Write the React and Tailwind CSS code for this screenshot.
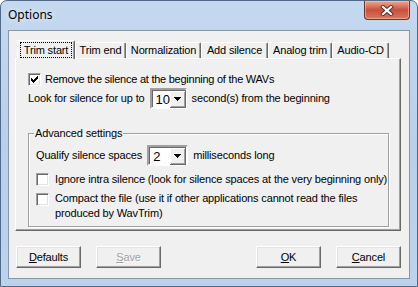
import React from 'react'

const FONT = "font-['Liberation_Sans',Arial,sans-serif] text-[11px] tracking-[-0.15px] text-black"

function CheckBox({ checked }) {
  return (
    <span className="w-[13px] h-[13px] shrink-0 bg-white border border-t-[#a0a0a0] border-l-[#a0a0a0] border-r-white border-b-white shadow-[inset_1px_1px_0_#696969,inset_-1px_-1px_0_#e3e3e3] flex items-center justify-center">
      {checked && (
        <svg width="9" height="9" viewBox="0 0 9 9" shapeRendering="crispEdges">
          <polygon points="1,3 3,5 7,1 8,1 8,3 3,8 1,6" fill="#000" />
        </svg>
      )}
    </span>
  )
}

function Combo({ value, width }) {
  return (
    <div
      className="h-[21px] shrink-0 bg-white border-2 border-t-[#a0a0a0] border-l-[#a0a0a0] border-r-white border-b-white flex"
      style={{ width }}
    >
      <div className="flex-1 flex border-t border-l border-[#696969]">
        <span className="flex-1 pl-[3px] leading-[17px] text-[13px]">{value}</span>
        <span className="w-[16px] h-[17px] bg-[#f0f0f0] border-r border-b border-[#696969] shadow-[inset_1px_1px_0_#fff,inset_-1px_-1px_0_#a0a0a0] flex items-center justify-center">
          <svg width="7" height="4" viewBox="0 0 7 4" shapeRendering="crispEdges">
            <polygon points="0,0 7,0 3.5,4" fill="#000" />
          </svg>
        </span>
      </div>
    </div>
  )
}

function Button({ children, disabled }) {
  return (
    <button
      className={`w-[65px] h-[22px] bg-[#f0f0f0] border border-t-white border-l-white border-r-[#696969] border-b-[#696969] shadow-[inset_-1px_-1px_0_#a0a0a0,inset_1px_1px_0_#e3e3e3] flex items-center justify-center ${
        disabled ? 'text-[#a0a0a0] [text-shadow:1px_1px_0_#fff]' : 'text-black'
      }`}
    >
      {children}
    </button>
  )
}

function Tab({ label, width }) {
  return (
    <div
      className="h-[16px] bg-[#f0f0f0] border-t border-l border-t-white border-l-white border-r border-r-[#696969] shadow-[inset_-1px_0_0_#a0a0a0] rounded-t-[2px] flex items-center justify-center"
      style={{ width }}
    >
      {label}
    </div>
  )
}

export default function App() {
  return (
    <div className={`w-[418px] h-[287px] overflow-hidden bg-white ${FONT}`}>
      <div className="w-full h-full flex flex-col rounded-t-[7px] border border-[#52698a] bg-gradient-to-b from-[#c4d9ef] via-[#b9d0ea] to-[#bcd3ec] px-[7px] pb-[7px]">
        {/* title bar */}
        <div className="h-[29px] shrink-0 flex items-start">
          <span className="pt-[5px] font-['Noto_Sans',sans-serif] text-[12px] tracking-normal [text-shadow:0_0_6px_#fff]">Options</span>
          <div className="ml-auto w-[46px] h-[19px] rounded-b-[4px] border border-t-0 border-[#6e3029] bg-gradient-to-b from-[#e8a893] via-[#c94f3c] to-[#d5785c] shadow-[inset_0_0_0_1px_rgba(255,210,200,0.5)] flex items-center justify-center">
            <svg width="14" height="11" viewBox="0 0 14 11">
              <path d="M3 2 L11 9 M11 2 L3 9" stroke="#5a2a25" strokeWidth="4" strokeLinecap="square" />
              <path d="M3 2 L11 9 M11 2 L3 9" stroke="#fff" strokeWidth="2.2" strokeLinecap="square" />
            </svg>
          </div>
        </div>

        {/* client area */}
        <div className="flex-1 border border-[#8597af] bg-[#f0f0f0] pl-[6px] pt-[9px] flex flex-col">
          {/* tabs */}
          <div className="h-[18px] flex items-end pl-[2px]">
            <div className="relative z-10 w-[58px] h-[19px] -mb-px bg-[#f0f0f0] border-t border-l border-t-white border-l-white border-r border-r-[#696969] shadow-[inset_-1px_0_0_#a0a0a0] rounded-t-[2px] flex justify-center pt-[1px]">
              <span className="h-[16px] px-[3px] border border-dotted border-black flex items-center">Trim start</span>
            </div>
            <Tab label="Trim end" width={51} />
            <Tab label="Normalization" width={75} />
            <Tab label="Add silence" width={67} />
            <Tab label="Analog trim" width={64} />
            <Tab label="Audio-CD" width={57} />
          </div>

          {/* panel */}
          <div className="w-[386px] h-[173px] border border-t-white border-l-white border-r-[#696969] border-b-[#696969] shadow-[inset_-1px_-1px_0_#a0a0a0] pl-[12px] pt-[14px] flex flex-col">
            <div className="flex items-center gap-[4px] h-[13px]">
              <CheckBox checked />
              <span className="whitespace-nowrap tracking-[-0.25px]">Remove the silence at the beginning of the WAVs</span>
            </div>
            <div className="flex items-center gap-[5px] mt-[2px]">
              <span>Look for silence for up to</span>
              <Combo value="10" width={37} />
              <span>second(s) from the beginning</span>
            </div>

            <fieldset className="mt-[18px] w-[361px] border border-[#a0a0a0] shadow-[1px_1px_0_#fff,inset_1px_1px_0_#fff] pl-[7px] pb-[5px]">
              <legend className="-ml-[2px] px-[1px] leading-[13px]">Advanced settings</legend>
              <div className="flex items-center gap-[5px] mt-[5px]">
                <span>Qualify silence spaces</span>
                <Combo value="2" width={41} />
                <span>milliseconds long</span>
              </div>
              <div className="flex items-center gap-[6px] mt-[6px] leading-[15px]">
                <CheckBox />
                <span className="whitespace-nowrap">Ignore intra silence (look for silence spaces at the very beginning only)</span>
              </div>
              <div className="flex items-start gap-[6px] mt-[4px] leading-[15px]">
                <span className="mt-[2px]"><CheckBox /></span>
                <span className="whitespace-nowrap">
                  Compact the file (use it if other applications cannot read the files
                  <br />
                  produced by WavTrim)
                </span>
              </div>
            </fieldset>
          </div>

          {/* buttons */}
          <div className="w-[386px] flex mt-[15px]">
            <span className="ml-[1px]">
              <Button><span><u>D</u>efaults</span></Button>
            </span>
            <span className="ml-[15px]">
              <Button disabled><span><u>S</u>ave</span></Button>
            </span>
            <span className="ml-auto">
              <Button><span><u>O</u>K</span></Button>
            </span>
            <span className="ml-[15px]">
              <Button><span><u>C</u>ancel</span></Button>
            </span>
          </div>
        </div>
      </div>
    </div>
  )
}
